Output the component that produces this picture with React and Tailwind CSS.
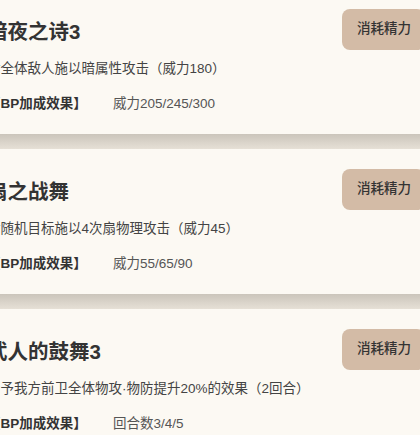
const skills = [
  {
    name: '暗夜之诗3',
    desc: '对全体敌人施以暗属性攻击（威力180）',
    bp: '威力205/245/300',
  },
  {
    name: '扇之战舞',
    desc: '对随机目标施以4次扇物理攻击（威力45）',
    bp: '威力55/65/90',
  },
  {
    name: '武人的鼓舞3',
    desc: '给予我方前卫全体物攻·物防提升20%的效果（2回合）',
    bp: '回合数3/4/5',
  },
];

function SkillCard({ skill }) {
  return (
    <div className="h-[145px] bg-[#fcf9f3] px-[20px] pt-[20px]">
      <div className="flex h-[40px] items-center justify-between">
        <h3 className="pt-[6px] text-[20.5px] font-bold leading-[28px] text-[#333]">{skill.name}</h3>
        <button
          type="button"
          className="h-[41px] rounded-[8px] bg-[#d3bba6] pl-[15px] pr-[14px] text-[13.5px] font-medium text-[#333]"
        >
          消耗精力
        </button>
      </div>
      <p className="mt-[10px] text-[13.5px] leading-[20px] text-[#444]">{skill.desc}</p>
      <div className="mt-[15px] flex text-[13.5px] leading-[20px]">
        <span className="w-[126px] font-bold text-[#333]">【BP加成效果】</span>
        <span className="text-[#555]">{skill.bp}</span>
      </div>
    </div>
  );
}

export default function App() {
  return (
    <div
      className="h-[435px] w-[420px] overflow-hidden bg-[#fcf9f3]"
      style={{ fontFamily: '"Liberation Sans", "Noto Sans CJK SC", sans-serif' }}
    >
      <div className="-ml-[33px] -mt-[11px] w-[478px]">
        {skills.map((skill, i) => (
          <div key={skill.name}>
            {i > 0 && <div className="h-[15px] bg-gradient-to-b from-[#cbc5bb] to-[#e6e0d6]" />}
            <SkillCard skill={skill} />
          </div>
        ))}
      </div>
    </div>
  );
}
